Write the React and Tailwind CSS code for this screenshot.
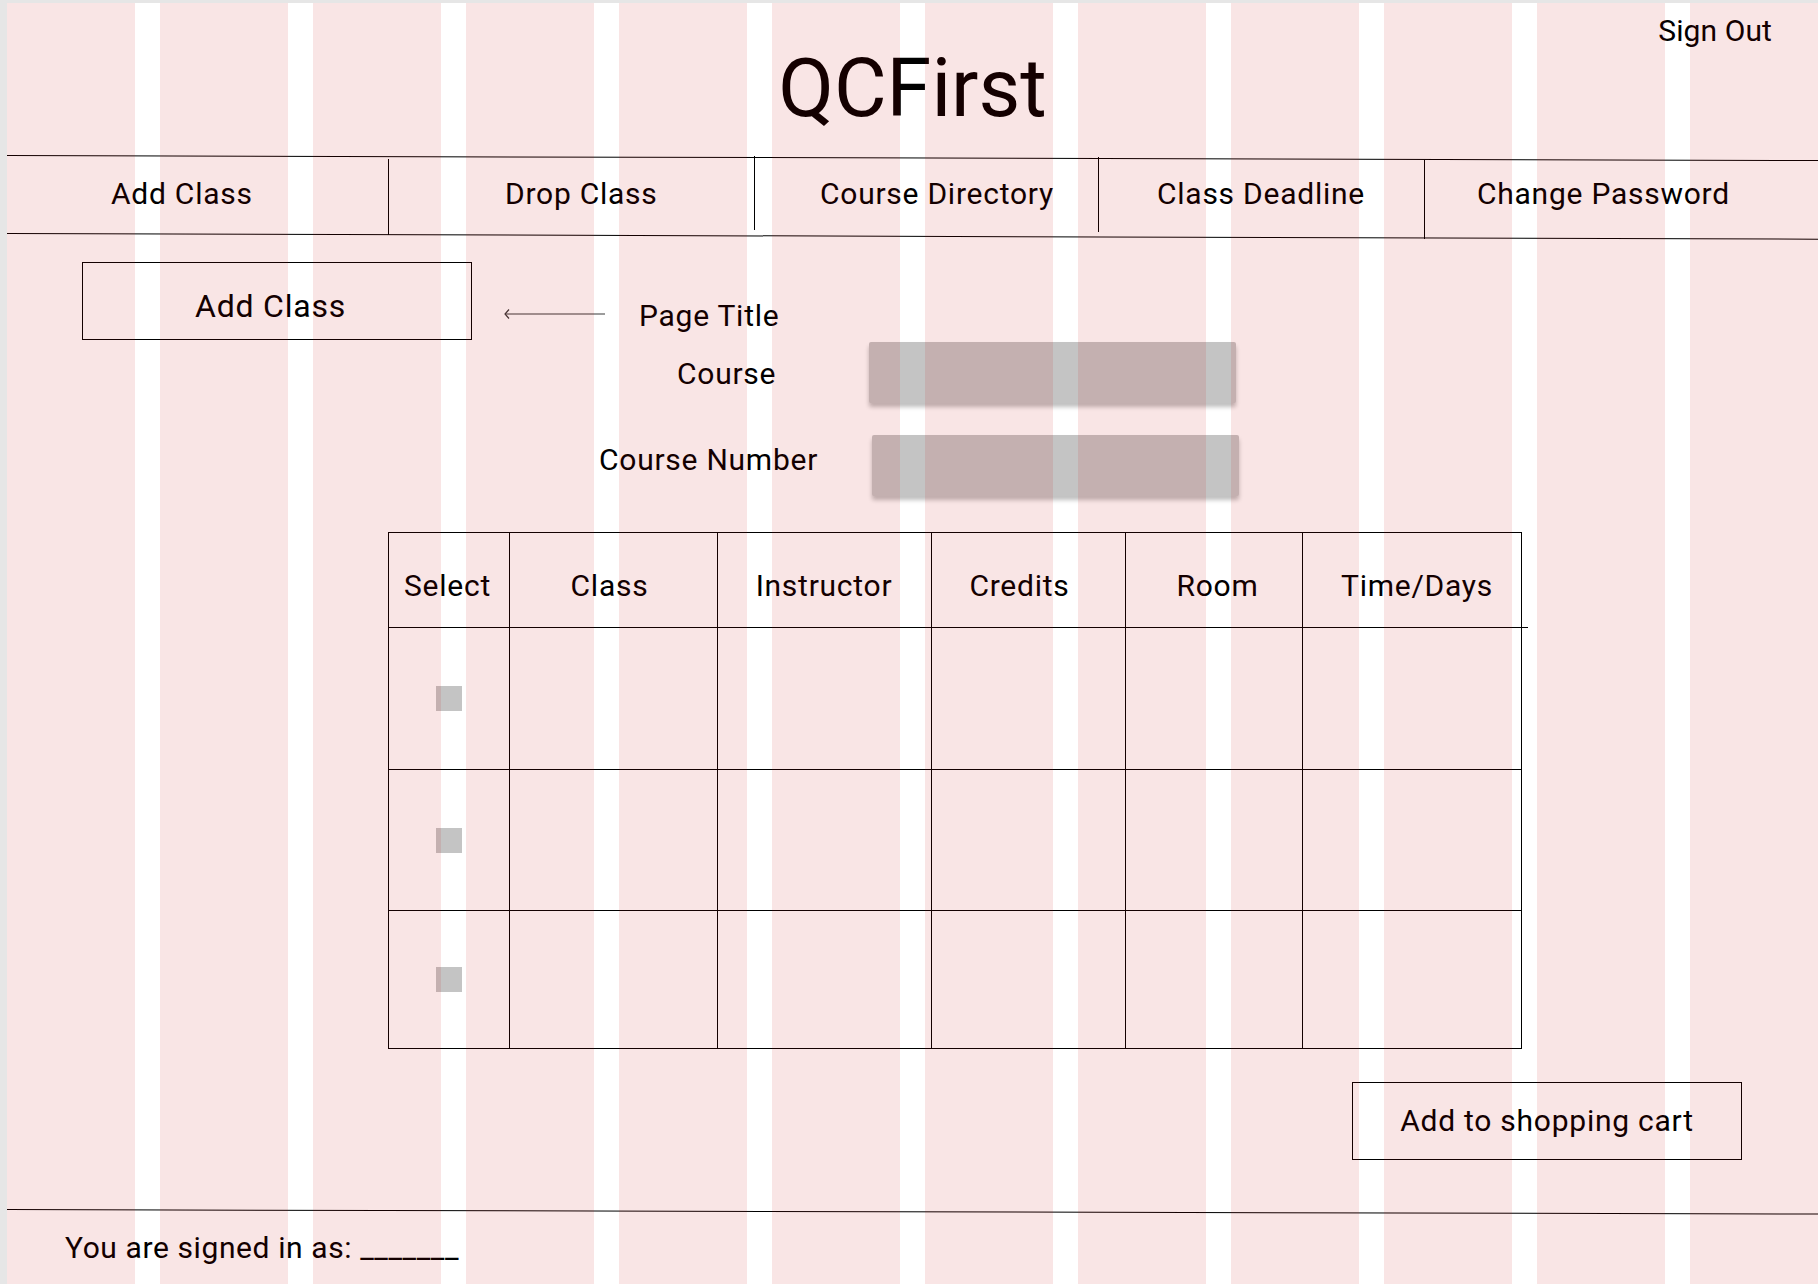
import React from "react";

const headers = [
  { t: "Select", c: "pr-[3px]" },
  { t: "Class", c: "pr-[8px]" },
  { t: "Instructor", c: "pr-[1px]" },
  { t: "Credits", c: "pr-[18px]" },
  { t: "Room", c: "pl-[7px]" },
  { t: "Time/Days", c: "pl-[10px]" },
];
const rowHeights = ["h-[142px]", "h-[141px]", "h-[138px]"];

function NavCell({ w, pl, children }) {
  return (
    <div className={`${w} ${pl} pt-[20px] shrink-0`}>
      <span className="text-[30px] leading-[36px] tracking-[0.75px] whitespace-nowrap">{children}</span>
    </div>
  );
}

export default function App() {
  return (
    <div className="relative w-[1818px] h-[1284px] overflow-hidden bg-[#e6e6e6] pl-[7px] pt-[3px] font-['Roboto',sans-serif] text-black">
      <div className="h-full bg-white flex flex-col">
        {/* Header */}
        <div className="grid grid-cols-[1fr_auto_1fr] h-[152px] shrink-0">
          <div />
          <div className="pt-[38px]">
            <h1 className="text-[81px] leading-[96px] font-normal whitespace-nowrap">QCFirst</h1>
          </div>
          <div className="flex justify-end pr-[46px] pt-[10px]">
            <span className="text-[30px] leading-[36px] tracking-[0.1px] whitespace-nowrap">Sign Out</span>
          </div>
        </div>

        {/* Nav */}
        <div className="h-px w-full bg-black origin-left rotate-[0.16deg] shrink-0" />
        <div className="flex h-[77px] shrink-0">
          <NavCell w="w-[381px]" pl="pl-[104px]">Add Class</NavCell>
          <div className="w-px shrink-0 bg-black mt-[3px] h-[76px]" />
          <NavCell w="w-[365px]" pl="pl-[116px]">Drop Class</NavCell>
          <div className="w-px shrink-0 bg-black mt-0 h-[74px]" />
          <NavCell w="w-[343px]" pl="pl-[65px]">Course Directory</NavCell>
          <div className="w-px shrink-0 bg-black mt-[1px] h-[75px]" />
          <NavCell w="w-[325px]" pl="pl-[58px]">Class Deadline</NavCell>
          <div className="w-px shrink-0 bg-black mt-[4px] h-[79px]" />
          <div className="flex-1 pl-[52px] pt-[20px]">
            <span className="text-[30px] leading-[36px] tracking-[0.75px] whitespace-nowrap">Change Password</span>
          </div>
        </div>
        <div className="h-px w-full bg-black origin-left rotate-[0.18deg] shrink-0" />

        {/* Page title row */}
        <div className="flex items-start mt-[28px] ml-[75px] shrink-0">
          <div className="w-[390px] h-[78px] border border-black pl-[112px] pt-[24px]">
            <span className="text-[32px] leading-[38px] tracking-[0.8px] whitespace-nowrap">Add Class</span>
          </div>
          <svg className="ml-[32px] mt-[46px]" width="101" height="12" viewBox="0 0 101 12">
            <path d="M1 6H101" stroke="#3a3a3a" strokeWidth="1.2" />
            <path d="M5 1.5L1 6L5 10.5" stroke="#3a3a3a" strokeWidth="1.2" fill="none" />
          </svg>
          <span className="ml-[34px] mt-[36px] text-[30px] leading-[36px] tracking-[0.75px] whitespace-nowrap">Page Title</span>
        </div>

        {/* Course row */}
        <div className="flex items-start mt-[2px] shrink-0">
          <div className="w-[862px] pl-[670px] mt-[14px]">
            <span className="text-[30px] leading-[36px] tracking-[0.75px] whitespace-nowrap">Course</span>
          </div>
          <div className="w-[367px] h-[61px] bg-[#c4c4c4] rounded-[2px] shadow-[0_4px_4px_rgba(0,0,0,0.25)]" />
        </div>

        {/* Course number row */}
        <div className="flex items-start mt-[32px] shrink-0">
          <div className="w-[865px] pl-[592px] mt-[7px]">
            <span className="text-[30px] leading-[36px] tracking-[0.75px] whitespace-nowrap">Course Number</span>
          </div>
          <div className="w-[367px] h-[61px] bg-[#c4c4c4] rounded-[2px] shadow-[0_4px_4px_rgba(0,0,0,0.25)]" />
        </div>

        {/* Table */}
        <div className="ml-[381px] mt-[36px] w-[1134px] border-l border-t border-black grid grid-cols-[121px_208px_214px_194px_177px_219px] shrink-0">
          {headers.map((h, i) => (
            <div
              key={h.t}
              className={`relative h-[95px] border-r border-b border-black flex justify-center pt-[35px] ${h.c}`}
            >
              <span className="text-[30px] leading-[36px] tracking-[0.75px] whitespace-nowrap">{h.t}</span>
              {i === headers.length - 1 && (
                <div className="absolute right-[-7px] bottom-[-1px] w-[7px] h-px bg-black" />
              )}
            </div>
          ))}
          {rowHeights.map((rh, r) =>
            headers.map((h, c) => (
              <div
                key={`${r}-${c}`}
                className={`${rh} border-r border-b border-black flex items-center justify-center`}
              >
                {c === 0 && <div className="w-[26px] h-[25px] bg-[#c4c4c4]" />}
              </div>
            ))
          )}
        </div>

        {/* Add to cart */}
        <div className="ml-[1345px] mt-[33px] w-[390px] h-[78px] border border-black flex items-center justify-center shrink-0">
          <span className="text-[30px] leading-[36px] tracking-[0.75px] whitespace-nowrap">Add to shopping cart</span>
        </div>

        {/* Footer */}
        <div className="mt-[49px] h-px w-full bg-black origin-left rotate-[0.146deg] shrink-0" />
        <div className="ml-[58px] mt-[20px] shrink-0">
          <span className="text-[30px] leading-[36px] tracking-[0.6px] whitespace-nowrap">You are signed in as: _______</span>
        </div>
      </div>

      {/* Layout grid overlay */}
      <div className="pointer-events-none absolute top-[3px] left-[7px] right-0 bottom-0 grid grid-cols-12 gap-x-[25.5px]">
        {Array.from({ length: 12 }).map((_, i) => (
          <div key={i} className="bg-[rgba(200,0,0,0.1)]" />
        ))}
      </div>
    </div>
  );
}
